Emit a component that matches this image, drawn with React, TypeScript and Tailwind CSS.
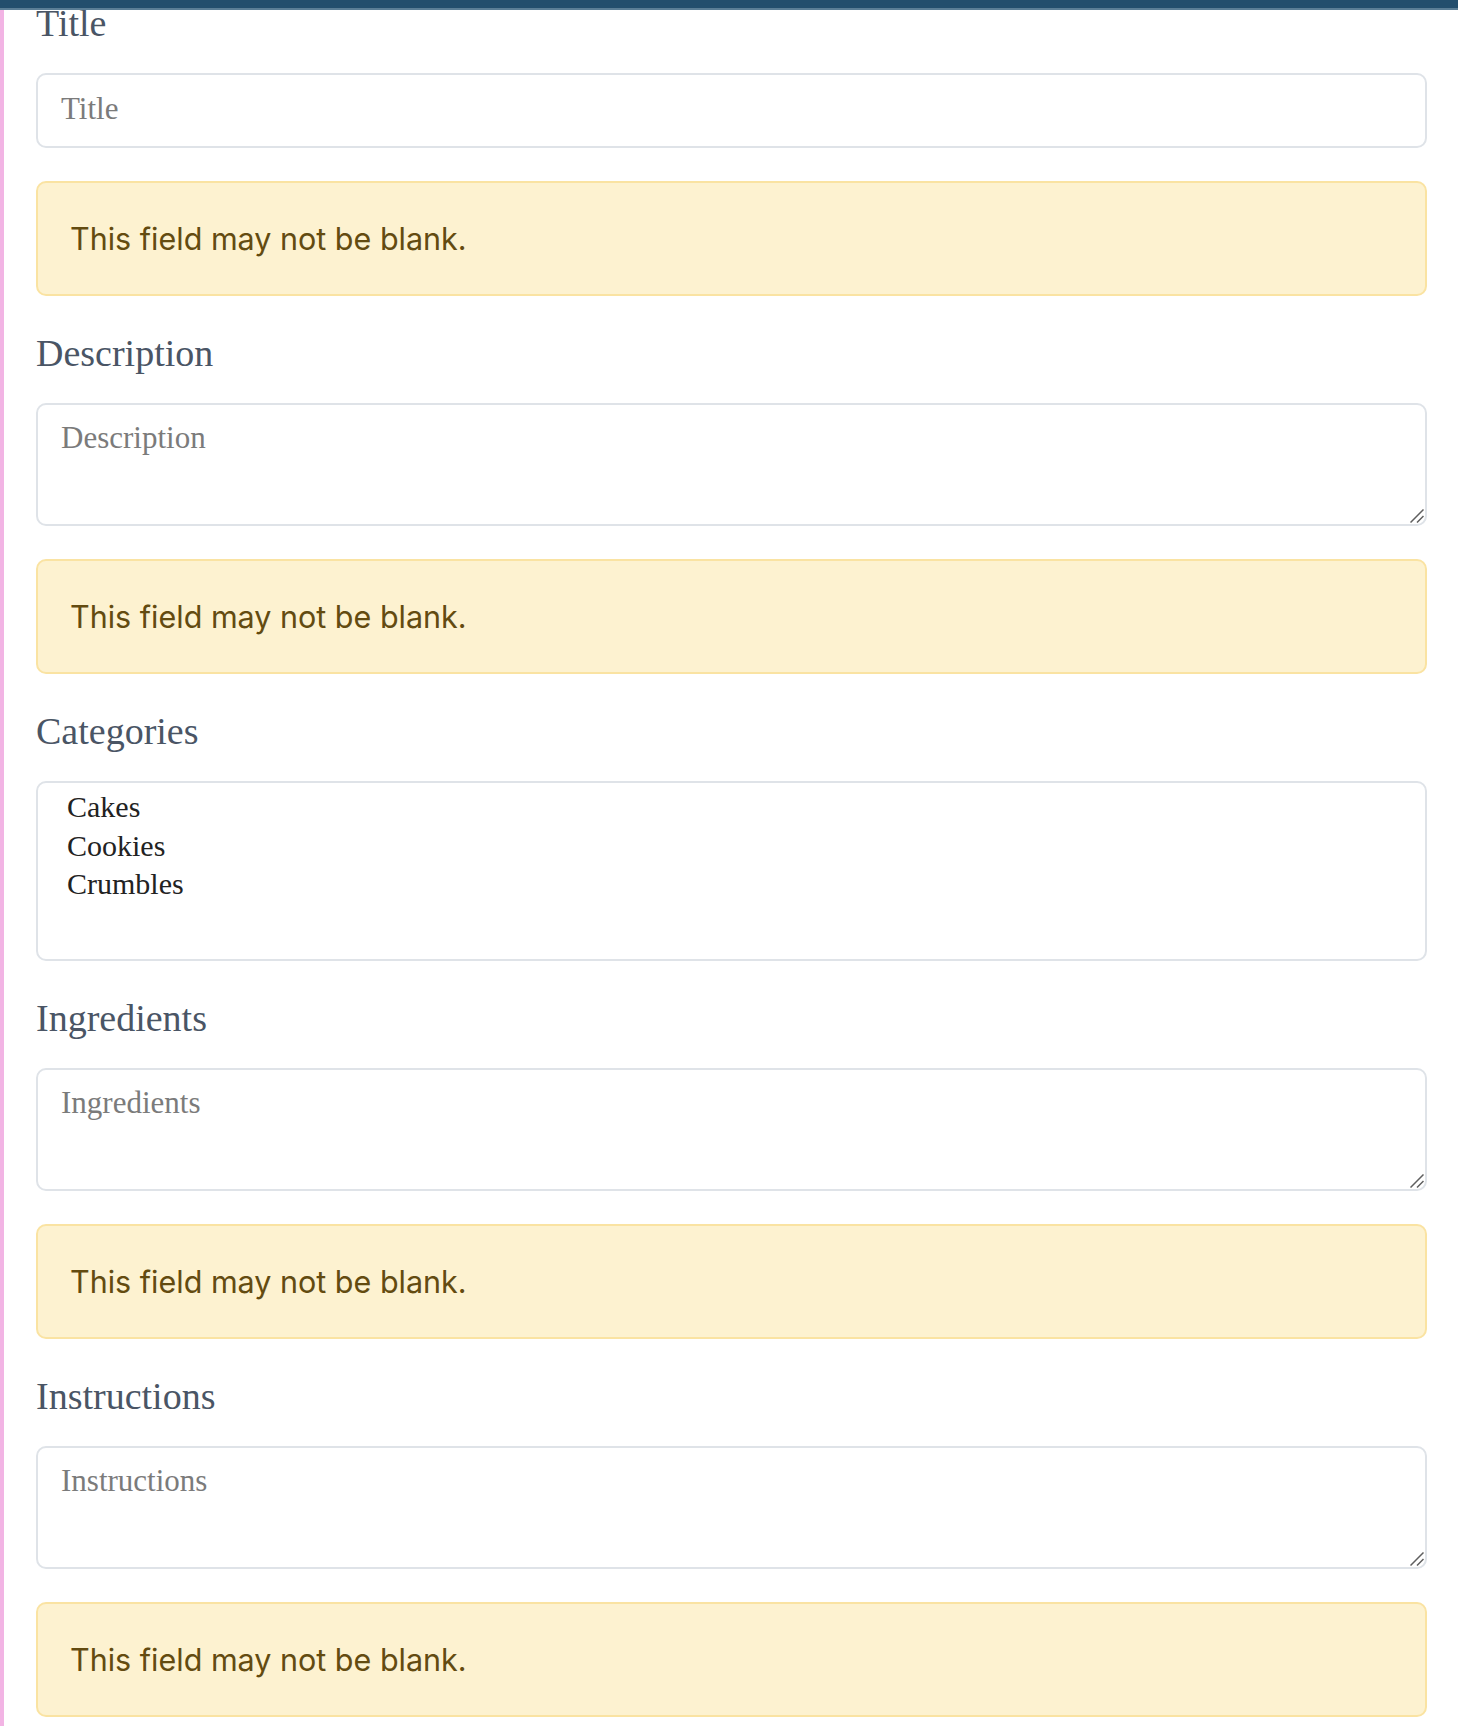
const serif = "font-['Liberation_Serif','DejaVu_Serif',serif]";

function Label({ children }: { children: string }) {
  return (
    <label className={`${serif} block text-[38px] leading-[38px] mb-[31px] text-[#4a5565]`}>
      {children}
    </label>
  );
}

function Warning() {
  return (
    <div className="mt-[33px] h-[115px] flex items-center px-[32px] rounded-[10px] border-2 border-[#fae3a2] bg-[#fdf2d0] text-[#634b10] font-['Inter','Roboto',sans-serif] text-[30.5px]">
      This field may not be blank.
    </div>
  );
}

function Area({ name }: { name: string }) {
  return (
    <div className="relative">
      <textarea
        placeholder={name}
        className={`${serif} block w-full h-[123px] resize-none px-[23px] py-[10px] text-[31px] leading-[45px] text-[#222] placeholder:text-[#7b7b7b] border-2 border-[#dfe3e8] rounded-[10px] bg-white outline-none`}
      />
      {/* resize grip */}
      <svg
        className="absolute right-[3px] bottom-[3px] pointer-events-none"
        width="14"
        height="14"
        viewBox="0 0 14 14"
      >
        <path d="M0.5 13.5 L13.5 0.5 M7 13.5 L13.5 7" stroke="#5f5f5f" strokeWidth="1.5" fill="none" />
      </svg>
    </div>
  );
}

export default function App() {
  return (
    <div className="relative min-h-[1726px] bg-white">
      <div className="absolute top-0 left-0 right-0 h-[10px] bg-[#234e6d] border-b-2 border-[#5b7e96] z-10" />
      <div className="absolute top-0 bottom-0 left-0 w-[4px] bg-[#f2b4e4]" />

      <form className="pl-[36px] pr-[31px]">
        <div className="pt-[4px]">
          <Label>Title</Label>
          <input
            placeholder="Title"
            className={`${serif} block w-full h-[75px] px-[23px] pb-[3px] text-[31px] text-[#222] placeholder:text-[#7b7b7b] border-2 border-[#dfe3e8] rounded-[10px] bg-white outline-none`}
          />
        </div>
        <Warning />

        <div className="pt-[38px]">
          <Label>Description</Label>
          <Area name="Description" />
        </div>
        <Warning />

        <div className="pt-[38px]">
          <Label>Categories</Label>
          <div
            className={`${serif} h-[180px] pl-[29px] pt-[5px] border-2 border-[#dfe3e8] rounded-[10px] text-[30px] leading-[38.5px] text-[#222]`}
          >
            <div>Cakes</div>
            <div>Cookies</div>
            <div>Crumbles</div>
          </div>
        </div>

        <div className="pt-[38px]">
          <Label>Ingredients</Label>
          <Area name="Ingredients" />
        </div>
        <Warning />

        <div className="pt-[38px]">
          <Label>Instructions</Label>
          <Area name="Instructions" />
        </div>
        <Warning />
      </form>
    </div>
  );
}
